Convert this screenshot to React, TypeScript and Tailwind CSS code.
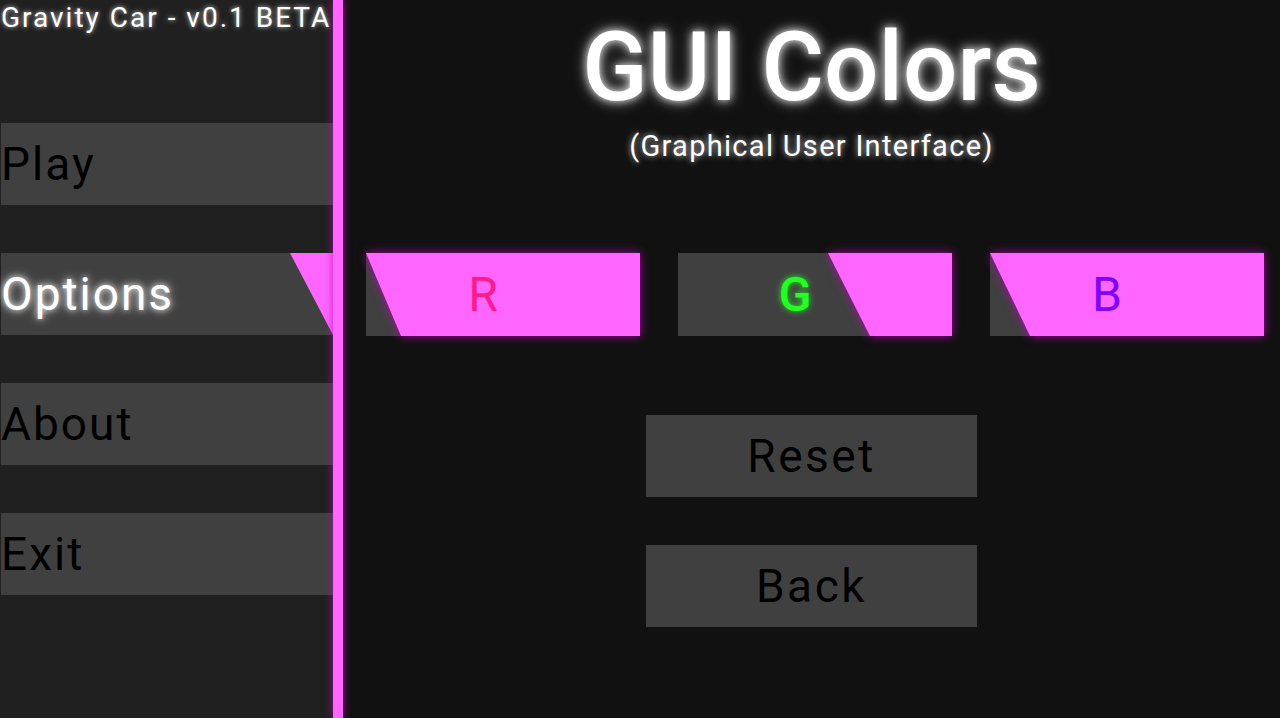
import React from "react";

const font = { fontFamily: "Roboto, 'Noto Sans', sans-serif" };

function MenuItem({ label, active }: { label: string; active?: boolean }) {
  return (
    <div className="relative flex h-[82px] w-full items-center bg-[#404040]">
      <span
        className={
          "text-[46px] leading-none tracking-[2px] " +
          (active
            ? "text-white [text-shadow:0_0_6px_rgba(255,255,255,0.9),0_0_12px_rgba(255,255,255,0.5)]"
            : "text-black")
        }
      >
        {label}
      </span>
      {active && (
        <div className="absolute right-0 top-0 h-full w-[43px] bg-[#ff66ff] [clip-path:polygon(0_0,100%_0,100%_100%)]" />
      )}
    </div>
  );
}

function ColorBox({
  letter,
  letterClass,
  clip,
}: {
  letter: string;
  letterClass: string;
  clip: string;
}) {
  return (
    <div className="relative flex h-[83px] w-[274px] items-center justify-center bg-[#404040]">
      <div className="absolute inset-0 [filter:drop-shadow(0_0_5px_rgba(190,0,190,0.9))]">
        <div className={"h-full w-full bg-[#ff66ff] " + clip} />
      </div>
      <span className={"relative pr-[40px] text-[48px] leading-none " + letterClass}>{letter}</span>
    </div>
  );
}

export default function App() {
  return (
    <div className="flex h-[718px] w-[1280px] overflow-hidden bg-[#111111]" style={font}>
      <aside className="flex w-[333px] shrink-0 flex-col bg-[#202020]">
        <div className="pl-[1px] pt-[4px] text-[28px] leading-none tracking-[2px] whitespace-nowrap text-white [text-shadow:0_0_5px_rgba(255,255,255,0.8)]">
          Gravity Car - v0.1 BETA
        </div>
        <div className="mt-[91px] flex flex-col gap-[48px] pl-[1px]">
          <MenuItem label="Play" />
          <MenuItem label="Options" active />
          <MenuItem label="About" />
          <MenuItem label="Exit" />
        </div>
      </aside>
      <div className="relative z-10 w-[10px] shrink-0 bg-[#ff66ff] shadow-[0_0_8px_rgba(190,0,190,0.8)]" />
      <main className="flex flex-1 flex-col items-center pt-[19px]">
        <h1 className="h-[96px] text-[96px] font-medium leading-none text-white [text-shadow:0_0_8px_rgba(255,255,255,0.9),0_0_16px_rgba(255,255,255,0.5)]">
          GUI Colors
        </h1>
        <p className="mt-[17px] h-[29px] text-[29px] leading-none tracking-[1.3px] text-white [text-shadow:0_0_6px_rgba(255,255,255,0.8)]">
          (Graphical User Interface)
        </p>
        <div className="mt-[92px] flex w-full gap-[38px] pl-[23px]">
          <ColorBox
            letter="R"
            letterClass="text-[#ff1a8c]"
            clip="[clip-path:polygon(0_0,100%_0,100%_100%,35px_100%)]"
          />
          <ColorBox
            letter="G"
            letterClass="text-[#22ff22] font-medium [text-shadow:0_0_6px_rgba(40,255,40,0.9)]"
            clip="[clip-path:polygon(150px_0,100%_0,100%_100%,192px_100%)]"
          />
          <ColorBox
            letter="B"
            letterClass="text-[#8000ff]"
            clip="[clip-path:polygon(0_0,100%_0,100%_100%,40px_100%)]"
          />
        </div>
        <button className="mt-[79px] flex h-[82px] w-[331px] items-center justify-center bg-[#404040] text-[46px] leading-none tracking-[2.5px] text-black">
          Reset
        </button>
        <button className="mt-[48px] flex h-[82px] w-[331px] items-center justify-center bg-[#404040] text-[46px] leading-none tracking-[2.5px] text-black">
          Back
        </button>
      </main>
    </div>
  );
}
